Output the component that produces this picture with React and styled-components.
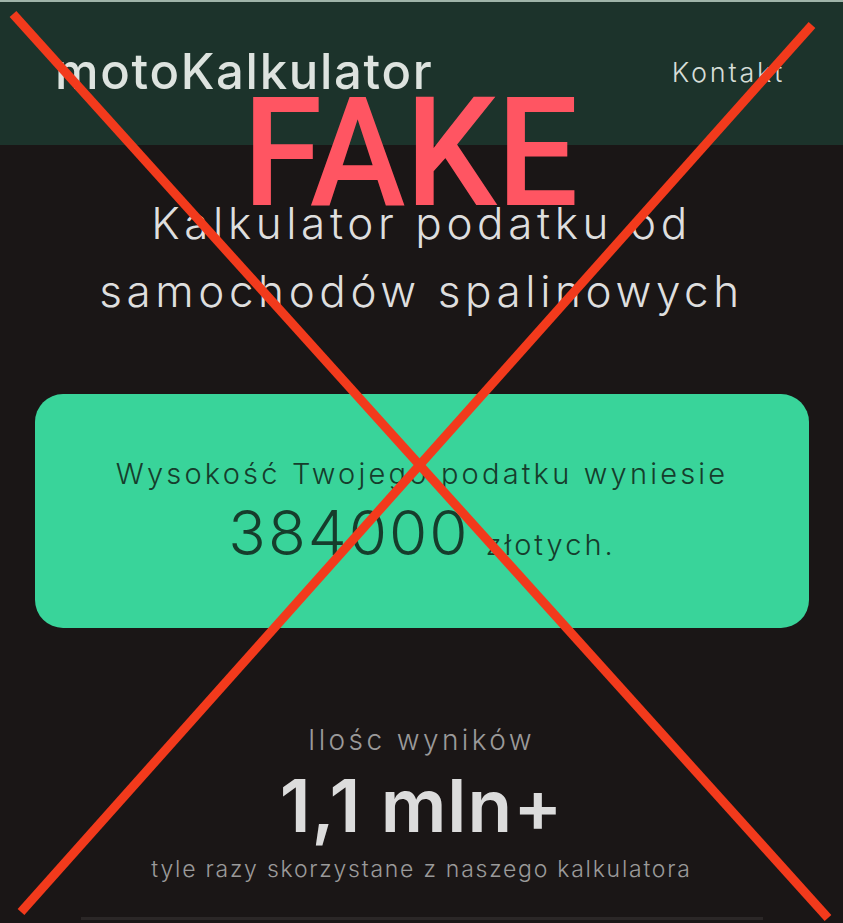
import React from 'react';
import styled, { createGlobalStyle } from 'styled-components';

const GlobalStyle = createGlobalStyle`
  html, body {
    margin: 0;
    padding: 0;
    background: #1a1616;
  }
  body {
    font-family: Inter, "Noto Sans", sans-serif;
  }
`;

const Page = styled.div`
  position: relative;
  width: 843px;
  height: 923px;
  overflow: hidden;
  background: #1a1616;
`;

const Header = styled.header`
  display: flex;
  justify-content: space-between;
  align-items: flex-start;
  height: 145px;
  box-sizing: border-box;
  padding: 40px 58px 0 55px;
  background: #1c332b;
  border-top: 2px solid #9fb4a9;
`;

const Logo = styled.div`
  font-size: 49px;
  font-weight: 500;
  letter-spacing: 1.7px;
  color: #dde3df;
`;

const NavLink = styled.a`
  margin-top: 14px;
  font-size: 27px;
  font-weight: 300;
  letter-spacing: 2.8px;
  color: #d6ddd8;
`;

const Title = styled.h1`
  margin: 44px 0 0;
  text-align: center;
  font-size: 44px;
  line-height: 68px;
  font-weight: 300;
  letter-spacing: 4.6px;
  color: #dedede;
`;

const ResultCard = styled.section`
  display: flex;
  flex-direction: column;
  align-items: center;
  justify-content: center;
  margin: 69px 34px 0 35px;
  height: 234px;
  border-radius: 28px;
  background: #39d49a;
  color: #163d2c;
`;

const ResultLabel = styled.div`
  font-size: 29px;
  font-weight: 300;
  letter-spacing: 3.2px;
  margin-top: 4px;
`;

const ResultValue = styled.div`
  display: flex;
  align-items: baseline;
  gap: 16px;
  margin-top: 4px;
`;

const Amount = styled.span`
  font-size: 62px;
  font-weight: 300;
  letter-spacing: 2px;
`;

const Currency = styled.span`
  font-size: 29px;
  font-weight: 300;
  letter-spacing: 3px;
`;

const Stats = styled.section`
  display: flex;
  flex-direction: column;
  align-items: center;
  margin-top: 95px;
  text-align: center;
`;

const StatLabel = styled.div`
  font-size: 28px;
  font-weight: 300;
  letter-spacing: 3.4px;
  color: #9a9a9a;
`;

const StatValue = styled.div`
  font-size: 73px;
  font-weight: 600;
  letter-spacing: 1px;
  line-height: 1;
  margin-top: 12px;
  color: #dcdcdc;
`;

const StatCaption = styled.div`
  font-size: 23px;
  font-weight: 300;
  letter-spacing: 1.75px;
  margin-top: 13px;
  color: #9a9a9a;
`;

const BottomEdge = styled.div`
  height: 3px;
  margin: 34px 80px 0 81px;
  background: #2b2727;
`;

const Stamp = styled.div`
  position: absolute;
  top: 77px;
  left: 0;
  right: 0;
  text-align: center;
  font-family: Roboto, "Liberation Sans", sans-serif;
  font-size: 152px;
  font-weight: 500;
  line-height: 1;
  color: #ff5562;
  transform: translateX(-11px) scaleX(0.95);
  pointer-events: none;
`;

const Cross = styled.svg`
  position: absolute;
  inset: 0;
  pointer-events: none;
`;

export default function App() {
  return (
    <Page>
      <GlobalStyle />
      <Header>
        <Logo>motoKalkulator</Logo>
        <NavLink>Kontakt</NavLink>
      </Header>
      <Title>
        Kalkulator podatku od
        <br />
        samochodów spalinowych
      </Title>
      <ResultCard>
        <ResultLabel>Wysokość Twojego podatku wyniesie</ResultLabel>
        <ResultValue>
          <Amount>384000</Amount>
          <Currency>złotych.</Currency>
        </ResultValue>
      </ResultCard>
      <Stats>
        <StatLabel>Ilośc wyników</StatLabel>
        <StatValue>1,1 mln+</StatValue>
        <StatCaption>tyle razy skorzystane z naszego kalkulatora</StatCaption>
      </Stats>
      <BottomEdge />
      <Stamp>FAKE</Stamp>
      <Cross width="843" height="923" viewBox="0 0 843 923">
        <line x1="13" y1="14" x2="828" y2="918" stroke="#f23a1c" strokeWidth="9" />
        <line x1="812" y1="25" x2="21" y2="912" stroke="#f23a1c" strokeWidth="9" />
      </Cross>
    </Page>
  );
}
